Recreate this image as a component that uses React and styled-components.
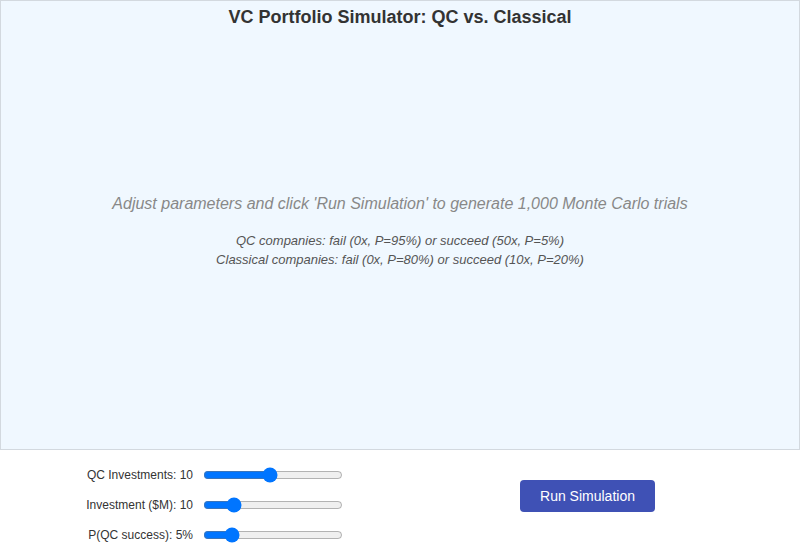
import React, { useState } from 'react';
import styled, { createGlobalStyle } from 'styled-components';

const Global = createGlobalStyle`
  html, body { margin: 0; padding: 0; background: #fff; }
  body { font-family: "Liberation Sans", Arial, sans-serif; }
`;

const Page = styled.div`
  width: 800px;
  height: 552px;
  display: flex;
  flex-direction: column;
`;

const Plot = styled.div`
  height: 450px;
  box-sizing: border-box;
  background: #f0f8ff;
  border: 1px solid #d3d9df;
  display: flex;
  flex-direction: column;
`;

const Title = styled.h1`
  margin: 0;
  padding-top: 5px;
  font-size: 18px;
  font-weight: bold;
  color: #333;
  text-align: center;
  line-height: 22px;
`;

const Placeholder = styled.div`
  flex: 1;
  display: flex;
  flex-direction: column;
  align-items: center;
  justify-content: center;
  font-style: italic;
  padding-bottom: 14px;
`;

const Lead = styled.div`
  font-size: 16px;
  color: #888;
  margin-bottom: 18px;
`;

const Note = styled.div`
  font-size: 13px;
  color: #555;
  line-height: 19px;
`;

const Controls = styled.div`
  flex: 1;
  display: flex;
  align-items: center;
`;

const Sliders = styled.div`
  width: 352px;
  display: flex;
  flex-direction: column;
  gap: 10px;
  padding-top: 8px;
`;

const Row = styled.label`
  display: flex;
  align-items: center;
  height: 20px;
  font-size: 12px;
  color: #333;
`;

const Label = styled.span`
  width: 203px;
  text-align: right;
  padding-right: 10px;
  box-sizing: border-box;
`;

const Range = styled.input`
  width: 140px;
  margin: 0;
`;

const ButtonWrap = styled.div`
  flex: 1;
  display: flex;
  justify-content: center;
  padding-left: 23px;
  padding-bottom: 10px;
`;

const RunButton = styled.button`
  width: 135px;
  height: 32px;
  background: #3f51b5;
  color: #fff;
  border: none;
  border-radius: 4px;
  font-family: "Liberation Sans", Arial, sans-serif;
  font-size: 14px;
  cursor: pointer;
`;

export default function App() {
  const [qc, setQc] = useState(10);
  const [inv, setInv] = useState(10);
  const [p, setP] = useState(5);

  return (
    <Page>
      <Global />
      <Plot>
        <Title>VC Portfolio Simulator: QC vs. Classical</Title>
        <Placeholder>
          <Lead>Adjust parameters and click 'Run Simulation' to generate 1,000 Monte Carlo trials</Lead>
          <Note>QC companies: fail (0x, P=95%) or succeed (50x, P=5%)</Note>
          <Note>Classical companies: fail (0x, P=80%) or succeed (10x, P=20%)</Note>
        </Placeholder>
      </Plot>
      <Controls>
        <Sliders>
          <Row>
            <Label>QC Investments: {qc}</Label>
            <Range type="range" min="1" max="20" value={qc} onChange={e => setQc(+e.target.value)} />
          </Row>
          <Row>
            <Label>Investment ($M): {inv}</Label>
            <Range type="range" min="1" max="50" value={inv} onChange={e => setInv(+e.target.value)} />
          </Row>
          <Row>
            <Label>P(QC success): {p}%</Label>
            <Range type="range" min="1" max="25" value={p} onChange={e => setP(+e.target.value)} />
          </Row>
        </Sliders>
        <ButtonWrap>
          <RunButton>Run Simulation</RunButton>
        </ButtonWrap>
      </Controls>
    </Page>
  );
}
